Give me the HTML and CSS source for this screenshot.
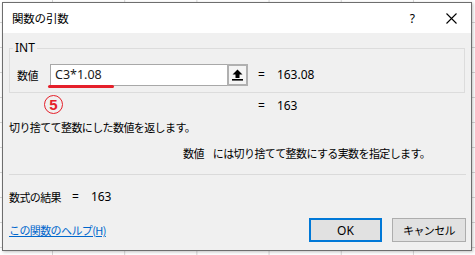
FILE: index.html
```html
<!DOCTYPE html>
<html lang="ja">
<head>
<meta charset="utf-8">
<link rel="stylesheet" href="styles.css">
</head>
<body>
<div class="window">
  <div class="titlebar">
    <span class="title cjk">関数の引数</span>
    <span class="help">?</span>
    <span class="close"><svg width="11" height="11" viewBox="0 0 11 11"><path d="M0.5 0.5 L10.5 10.5 M10.5 0.5 L0.5 10.5" stroke="#000" stroke-width="1.1" fill="none"/></svg></span>
  </div>
  <div class="content">
    <fieldset class="group">
      <legend class="legend">INT</legend>
      <div class="arg-row">
        <span class="arg-label cjk">数値</span>
        <div class="ref-input">
          <span class="ref-text">C3*1.08</span>
          <span class="ref-btn"><svg width="11" height="12" viewBox="0 0 11 12"><path d="M5.5 0.5 L10.5 5.5 H7.5 V9 H3.5 V5.5 H0.5 Z" fill="#000"/><rect x="0" y="10" width="11" height="1.6" fill="#000"/></svg></span>
          <span class="underline"></span>
        </div>
        <span class="eq">=</span><span class="val">163.08</span>
      </div>
    </fieldset>
    <div class="result-row">
      <span class="mark">5</span>
      <span class="eq">=</span><span class="val">163</span>
    </div>
    <div class="desc cjk">切り捨てて整数にした数値を返します。</div>
    <div class="arg-desc cjk"><span class="arg-name">数値</span>には切り捨てて整数にする実数を指定します。</div>
    <div class="separator"></div>
    <div class="formula"><span class="cjk">数式の結果</span><span class="eq2">=</span><span class="val2">163</span></div>
    <div class="bottom-row">
      <a class="help-link cjk" href="#">この関数のヘルプ(H)</a>
      <button class="btn btn-ok">OK</button>
      <button class="btn btn-cancel cjk">キャンセル</button>
    </div>
  </div>
</div>
</body>
</html>
```
FILE: styles.css
```css
html, body {
  margin: 0;
  padding: 0;
}
body {
  width: 475px;
  height: 255px;
  overflow: hidden;
  background-color: #fff;
  background-image:
    linear-gradient(to right, #d6d6d6 1px, transparent 1px),
    linear-gradient(to bottom, #d6d6d6 1px, transparent 1px);
  background-size: 72.2px 25px;
  background-position: 52px 22px;
  font-family: "Noto Sans", "Noto Sans CJK JP", sans-serif;
  font-size: 12px;
  color: #000;
}
.cjk {
  font-family: "Noto Sans CJK JP", sans-serif;
  font-size: 11px;
  letter-spacing: -0.6px;
}
.window {
  margin: 2px 0 0 2px;
  width: 470px;
  height: 249px;
  box-sizing: border-box;
  border: 1px solid #6e6e6e;
  background: #f0f0f0;
  box-shadow: 1px 1px 3px rgba(0,0,0,0.25);
  display: flex;
  flex-direction: column;
}
.titlebar {
  height: 30px;
  background: #fff;
  display: flex;
  align-items: center;
  padding: 0 14px 0 9px;
}
.title {
  flex: 1;
  font-size: 11.5px;
  letter-spacing: -0.2px;
}
.help {
  font-size: 12px;
  margin-right: 31px;
}
.close {
  display: flex;
}
.content {
  padding: 0 5px 8px 6px;
  display: flex;
  flex-direction: column;
  line-height: 16px;
}
.group {
  margin: 8px 1px 0 0;
  padding: 0;
  min-width: 0;
  border: 1px solid #dcdcdc;
}
.legend {
  margin-left: 3px;
  padding: 0 2px;
  line-height: 14px;
  font-size: 12px;
}
.arg-row {
  display: flex;
  align-items: center;
  padding: 9px 0 6px 7px;
}
.arg-label {
  width: 33px;
}
.ref-input {
  position: relative;
  width: 198px;
  height: 22px;
  box-sizing: border-box;
  border: 1px solid #a8a8a8;
  background: #fff;
  display: flex;
  align-items: center;
}
.ref-text {
  flex: 1;
  padding-left: 4px;
  font-size: 12.5px;
  color: #1a1a1a;
}
.ref-btn {
  width: 21px;
  height: 22px;
  margin: -1px -1px -1px 0;
  box-sizing: border-box;
  border: 2px solid #b0b0b0;
  background: #f4f4f4;
  display: flex;
  align-items: center;
  justify-content: center;
}
.underline {
  position: absolute;
  left: -3px;
  top: 20px;
  width: 66px;
  height: 3px;
  border-radius: 2px;
  background: #e5202a;
}
.eq {
  margin-left: 10px;
}
.val {
  margin-left: 12px;
}
.result-row {
  position: relative;
  margin-top: 5px;
  padding-left: 249px;
  display: flex;
}
.result-row .eq {
  margin-left: 0;
}
.mark {
  position: absolute;
  left: 35px;
  top: -3px;
  width: 19px;
  height: 19px;
  box-sizing: border-box;
  border: 1.3px solid #e5202a;
  border-radius: 50%;
  color: #e5202a;
  font-family: "Liberation Sans", sans-serif;
  font-weight: bold;
  font-size: 15px;
  line-height: 17px;
  text-align: center;
}
.desc {
  margin-top: 5px;
}
.arg-desc {
  margin-top: 10px;
  padding-left: 174px;
}
.arg-name {
  margin-right: 9px;
}
.separator {
  margin-top: 13px;
  height: 1px;
  background: #dadada;
}
.formula {
  margin-top: 14px;
  display: flex;
}
.eq2 {
  margin-left: 11px;
}
.val2 {
  margin-left: 12px;
}
.bottom-row {
  margin-top: 13px;
  display: flex;
  align-items: center;
  height: 24px;
}
.help-link {
  flex: 1;
  color: #0066cc;
  text-decoration: underline;
}
.btn {
  height: 24px;
  box-sizing: border-box;
  background: #e1e1e1;
  border: 1px solid #adadad;
  padding: 0;
  font-family: "Noto Sans", "Noto Sans CJK JP", sans-serif;
  font-size: 12px;
  color: #000;
}
.btn-ok {
  width: 73px;
  border: 2px solid #0078d7;
}
.btn-cancel {
  width: 74px;
  margin-left: 10px;
  font-family: "Noto Sans CJK JP", sans-serif;
  font-size: 11px;
}
```
